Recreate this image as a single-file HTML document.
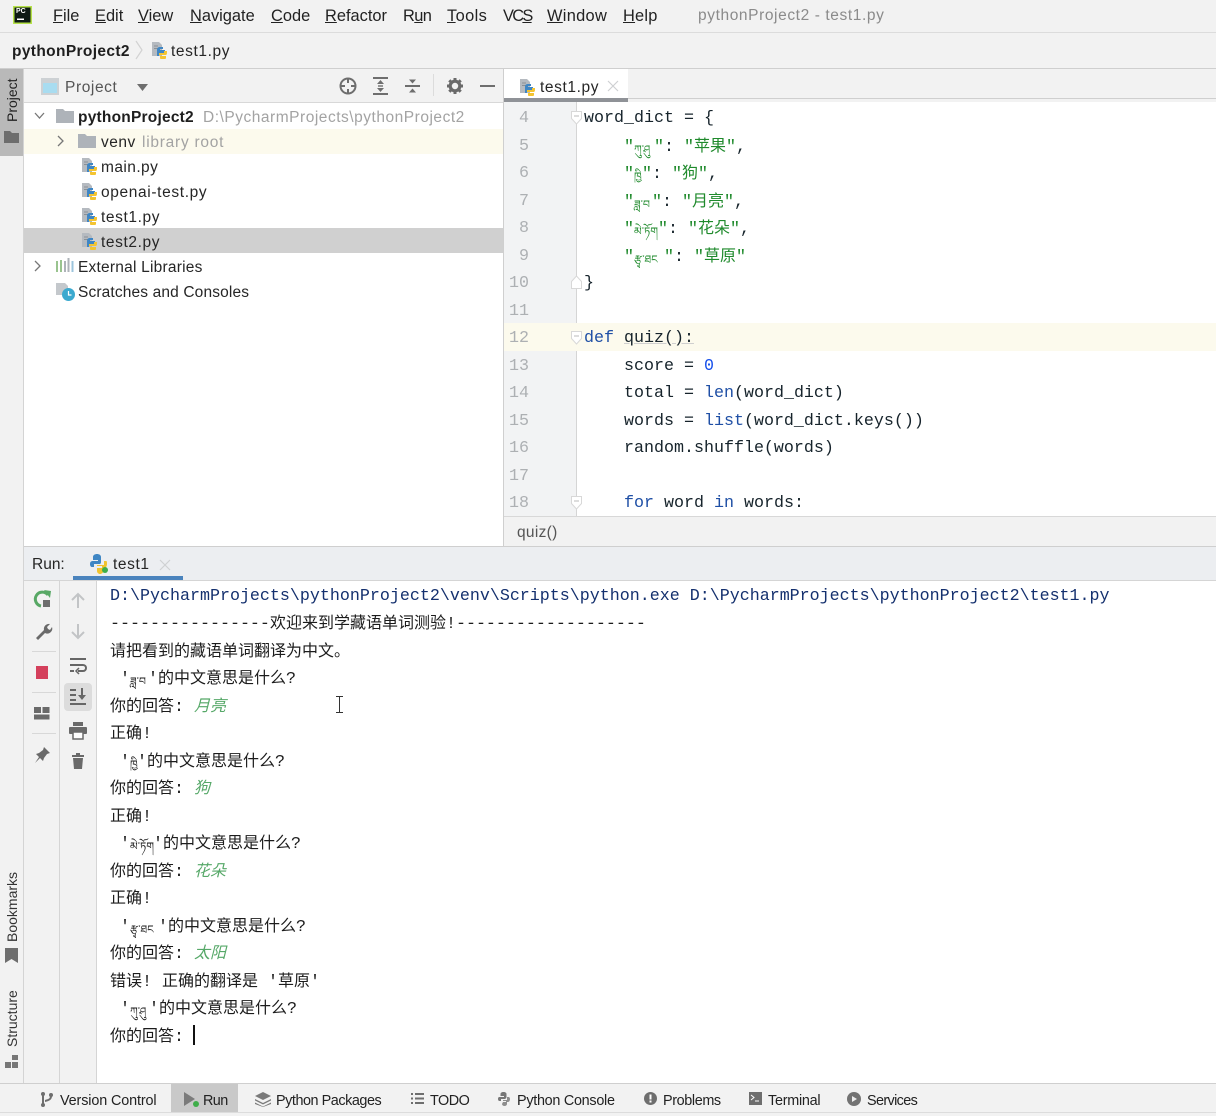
<!DOCTYPE html>
<html lang="zh"><head><meta charset="utf-8"><title>pythonProject2 - test1.py</title>
<style>
html,body{margin:0;padding:0;background:#f2f2f2}
#p{position:relative;width:1216px;height:1116px;overflow:hidden;background:#f2f2f2;font-family:"Liberation Sans","Noto Sans CJK SC",sans-serif;color:#222}
.b{position:absolute}
.t{position:absolute;white-space:pre;line-height:20px;font-size:15.5px;color:#262626}
.m{font-size:16.4px;color:#222;top:6px}
.c{position:absolute;white-space:pre;line-height:24px;font-family:"Liberation Mono","Noto Sans CJK SC",monospace;font-size:16.67px;color:#16232b}
.n{position:absolute;left:504px;width:25px;text-align:right;line-height:24px;font-family:"Liberation Mono",monospace;font-size:16.67px;color:#adb0b3;white-space:pre}
.g{color:#1f8a2c}.k{color:#1f4fa5}.bl{color:#1750eb}.f{color:#0a5a98}
.o{position:absolute;left:110px;white-space:pre;line-height:24px;font-family:"Liberation Mono","Noto Sans CJK SC",monospace;font-size:16.67px;color:#1c1c1c}
.z{font-size:16px}
.o i{color:#56a868;font-style:italic;font-size:16px}
.ti{display:inline-block;font-size:11px;line-height:10px;position:relative;top:2px;font-family:"Noto Sans CJK SC","DejaVu Sans",sans-serif}
svg{position:absolute;overflow:visible}
.s{font-size:14.4px;color:#222;top:1091px}
.v{transform-origin:0 0;transform:rotate(-90deg);font-size:14px;color:#333}
</style></head><body><div id="p">
<svg width="0" height="0" style="position:absolute"><defs>
<symbol id="py" viewBox="0 0 18 18"><path d="M2 1h7l3 3v11H2z" fill="#b5bac0"/><path d="M4 5h4M4 7.500h5" stroke="#8a9096"/><path d="M7 9c0-2 1-3 3-3h3v2h-3v1h5v3H9v3H7z" fill="#3f86c4"/><path d="M9 14h6c2 0 2-1 2-3v-1h-3v2H9z" fill="#f4c430"/><path d="M10 15h6v2c0 1-1 1-2 1h-3c-1 0-1-1-1-1z" fill="#f4c430"/></symbol>
<symbol id="fo" viewBox="0 0 18 16"><path d="M0 1h7l2 2h9v12H0z" fill="#aeb3b9"/></symbol>
</defs></svg>

<!-- top bars -->
<div class="b" style="left:0;top:32px;width:1216px;height:1px;background:#dcdcdc"></div>
<div class="b" style="left:0;top:68px;width:1216px;height:1px;background:#cfcfcf"></div>
<svg style="left:13px;top:6px" width="19" height="18" viewBox="0 0 19 18"><rect width="19" height="18" fill="#b6e24a"/><rect x="1.500" y="1.500" width="16" height="15" fill="#0d1a14"/><rect x="4" y="12.500" width="7" height="1.500" fill="#fff"/></svg>
<div class="b" style="left:16px;top:8px;font-size:7px;line-height:8px;font-weight:bold;color:#fff">PC</div>
<div class="t m" style="left:53px"><u>F</u>ile</div>
<div class="t m" style="left:95px"><u>E</u>dit</div>
<div class="t m" style="left:138px"><u>V</u>iew</div>
<div class="t m" style="left:190px"><u>N</u>avigate</div>
<div class="t m" style="left:271px"><u>C</u>ode</div>
<div class="t m" style="left:325px"><u>R</u>efactor</div>
<div class="t m" style="left:403px;letter-spacing:-.6px">R<u>u</u>n</div>
<div class="t m" style="left:447px;letter-spacing:.4px"><u>T</u>ools</div>
<div class="t m" style="left:503px;letter-spacing:-1.700px">VC<u>S</u></div>
<div class="t m" style="left:547px;letter-spacing:.3px"><u>W</u>indow</div>
<div class="t m" style="left:623px;letter-spacing:.2px"><u>H</u>elp</div>
<div class="t m" style="left:698px;color:#8b8b8b;font-size:15.500px;letter-spacing:.6px">pythonProject2 - test1.py</div>

<div class="t" style="left:12px;top:42px;font-weight:bold;font-size:15.500px;color:#1e1e1e;letter-spacing:.36px">pythonProject2</div>
<svg style="left:135px;top:40px" width="9" height="20"><path d="M1 1l6 9-6 9" fill="none" stroke="#d2d2d2" stroke-width="1.200"/></svg>
<svg style="left:150px;top:41px" width="18" height="18"><use href="#py"/></svg>
<div class="t" style="left:171px;top:42px;letter-spacing:.6px">test1.py</div>

<!-- left stripe -->
<div class="b" style="left:0;top:69px;width:24px;height:87px;background:#b9b9b9"></div>
<div class="b" style="left:23px;top:69px;width:1px;height:1014px;background:#d4d4d4"></div>
<div class="t v" style="left:2px;top:122px;color:#222">Project</div>
<svg style="left:4px;top:130px" width="15" height="13"><path d="M0 1h6l2 2h7v10H0z" fill="#6d6d6d"/></svg>
<div class="t v" style="left:2px;top:942px">Bookmarks</div>
<svg style="left:5px;top:948px" width="13" height="15"><path d="M0 0h13v15l-6.500-4L0 15z" fill="#6e6e6e"/></svg>
<div class="t v" style="left:2px;top:1047px">Structure</div>
<svg style="left:5px;top:1055px" width="14" height="14"><rect x="7" y="0" width="6" height="5" fill="#777"/><rect x="0" y="7" width="6" height="6" fill="#777"/><rect x="7" y="7" width="6" height="6" fill="#777"/></svg>

<!-- project panel -->
<div class="b" style="left:24px;top:102px;width:479px;height:444px;background:#fff"></div>
<div class="b" style="left:24px;top:102px;width:479px;height:1px;background:#d8d8d8"></div>
<svg style="left:41px;top:78px" width="18" height="17"><rect width="18" height="17" fill="#cdd1d4"/><rect x="2" y="5" width="14" height="10" fill="#a8dcf0"/></svg>
<div class="t" style="left:65px;top:78px;color:#555;letter-spacing:.6px">Project</div>
<svg style="left:137px;top:84px" width="11" height="7"><path d="M0 0h11L5.500 7z" fill="#6e6e6e"/></svg>
<svg style="left:339px;top:77px" width="18" height="18" fill="none" stroke="#6e6e6e"><circle cx="9" cy="9" r="7.500" stroke-width="2"/><path d="M9 1v5M9 12v5M1 9h5M12 9h5" stroke-width="2"/></svg>
<svg style="left:373px;top:77px" width="16" height="18" fill="#6e6e6e"><rect width="15" height="2" y="0"/><rect width="15" height="2" y="16"/><path d="M7.500 3l3.500 4H4zM7.500 15l3.500-4H4z"/><rect x="5" y="8.300" width="5" height="1.400"/></svg>
<svg style="left:405px;top:77px" width="16" height="18" fill="#6e6e6e"><rect width="15" height="2" y="8"/><path d="M7.500 6.500l3.500-4H4zM7.500 11.500l3.500 4H4z"/></svg>
<div class="b" style="left:433px;top:74px;width:1px;height:22px;background:#dcdcdc"></div>
<svg style="left:447px;top:78px" width="16" height="16" viewBox="0 0 16 16"><circle cx="8" cy="8" r="4.800" fill="none" stroke="#6a6a6a" stroke-width="3.200"/><path d="M8 0v3M8 13v3M0 8h3M13 8h3M2.300 2.300l2.200 2.200M11.500 11.500l2.200 2.200M2.300 13.700l2.200-2.200M11.500 4.500l2.200-2.200" stroke="#6a6a6a" stroke-width="3"/></svg>
<div class="b" style="left:480px;top:85px;width:15px;height:2px;background:#6e6e6e"></div>

<svg style="left:34px;top:112px" width="11" height="8"><path d="M1 1l4.500 5L10 1" fill="none" stroke="#777" stroke-width="1.300"/></svg>
<svg style="left:56px;top:108px" width="18" height="16"><use href="#fo"/></svg>
<div class="t" style="left:78px;top:108px;font-weight:bold;color:#1e1e1e;letter-spacing:.22px">pythonProject2</div>
<div class="t" style="left:203px;top:108px;color:#a3a3a3;letter-spacing:.52px">D:\PycharmProjects\pythonProject2</div>
<div class="b" style="left:24px;top:129px;width:479px;height:25px;background:#fcfaed"></div>
<svg style="left:57px;top:135px" width="8" height="12"><path d="M1 1l5 5-5 5" fill="none" stroke="#777" stroke-width="1.300"/></svg>
<svg style="left:78px;top:133px" width="18" height="16"><use href="#fo"/></svg>
<div class="t" style="left:101px;top:133px;letter-spacing:.5px">venv</div>
<div class="t" style="left:142px;top:133px;color:#a3a3a3;letter-spacing:.75px">library root</div>
<svg style="left:80px;top:157px" width="18" height="18"><use href="#py"/></svg>
<div class="t" style="left:101px;top:158px;letter-spacing:.43px">main.py</div>
<svg style="left:80px;top:182px" width="18" height="18"><use href="#py"/></svg>
<div class="t" style="left:101px;top:183px;letter-spacing:.64px">openai-test.py</div>
<svg style="left:80px;top:207px" width="18" height="18"><use href="#py"/></svg>
<div class="t" style="left:101px;top:208px;letter-spacing:.6px">test1.py</div>
<div class="b" style="left:24px;top:228px;width:479px;height:25px;background:#d0d0d0"></div>
<svg style="left:80px;top:232px" width="18" height="18"><use href="#py"/></svg>
<div class="t" style="left:101px;top:233px;letter-spacing:.6px">test2.py</div>
<svg style="left:34px;top:260px" width="8" height="12"><path d="M1 1l5 5-5 5" fill="none" stroke="#777" stroke-width="1.300"/></svg>
<svg style="left:56px;top:258px" width="18" height="15"><path d="M1 3v11" stroke="#9ac48f" stroke-width="2"/><path d="M5 2v12" stroke="#9ac48f" stroke-width="2"/><path d="M9 3v11" stroke="#aeb3b9" stroke-width="2"/><path d="M12.500 0v14" stroke="#aeb3b9" stroke-width="2"/><path d="M16.500 3v11" stroke="#9cc4dc" stroke-width="2"/></svg>
<div class="t" style="left:78px;top:258px;letter-spacing:.22px">External Libraries</div>
<svg style="left:56px;top:282px" width="20" height="20"><path d="M0 1h9l3 3v9H0z" fill="#c4c8cc"/><circle cx="12.500" cy="12.500" r="6.500" fill="#3ba9cf"/><path d="M12.500 9v4h3" stroke="#fff" fill="none" stroke-width="1.200"/></svg>
<div class="t" style="left:78px;top:283px;letter-spacing:.14px">Scratches and Consoles</div>

<!-- divider -->
<div class="b" style="left:503px;top:69px;width:1px;height:477px;background:#cfcfcf"></div>

<!-- editor -->
<div class="b" style="left:504px;top:69px;width:124px;height:29px;background:#fff"></div>
<div class="b" style="left:504px;top:98px;width:712px;height:1px;background:#cfcfcf"></div>
<div class="b" style="left:504px;top:98px;width:124px;height:4px;background:#8f9297"></div>
<svg style="left:518px;top:78px" width="18" height="18"><use href="#py"/></svg>
<div class="t" style="left:540px;top:78px;letter-spacing:.6px">test1.py</div>
<svg style="left:608px;top:81px" width="10" height="10"><path d="M0 0l10 10M10 0L0 10" stroke="#cfd1d3" stroke-width="1.200"/></svg>

<div class="b" style="left:504px;top:102px;width:712px;height:415px;background:#fff"></div>
<div class="b" style="left:504px;top:102px;width:72px;height:415px;background:#f2f3f4"></div>
<div class="b" style="left:576px;top:102px;width:1px;height:415px;background:#d5d5d5"></div>
<div class="b" style="left:504px;top:323px;width:712px;height:28px;background:#fcfaed"></div>

<div class="n" style="top:107px">4</div>
<div class="n" style="top:135px">5</div>
<div class="n" style="top:162px">6</div>
<div class="n" style="top:190px">7</div>
<div class="n" style="top:217px">8</div>
<div class="n" style="top:245px">9</div>
<div class="n" style="top:272px">10</div>
<div class="n" style="top:300px">11</div>
<div class="n" style="top:327px">12</div>
<div class="n" style="top:355px">13</div>
<div class="n" style="top:382px">14</div>
<div class="n" style="top:410px">15</div>
<div class="n" style="top:437px">16</div>
<div class="n" style="top:465px">17</div>
<div class="n" style="top:492px">18</div>

<svg style="left:571px;top:111px" width="11" height="14"><path d="M.5.500h10v7l-5 5.500-5-5.500z" fill="#fff" stroke="#d8d8d8"/><path d="M3 5h5" stroke="#bbb"/></svg>
<svg style="left:571px;top:275px" width="11" height="14"><path d="M.5 13.500h10v-7l-5-5.500-5 5.500z" fill="#fff" stroke="#d8d8d8"/></svg>
<svg style="left:571px;top:331px" width="11" height="14"><path d="M.5.500h10v7l-5 5.500-5-5.500z" fill="#fff" stroke="#d8d8d8"/><path d="M3 5h5" stroke="#bbb"/></svg>
<svg style="left:571px;top:496px" width="11" height="14"><path d="M.5.500h10v7l-5 5.500-5-5.500z" fill="#fff" stroke="#d8d8d8"/><path d="M3 5h5" stroke="#bbb"/></svg>

<div class="c" style="left:584px;top:107px">word_dict = {</div>
<div class="c g" style="left:624px;top:135px">"<span class="ti" style="width:20px">ཀུ་ཤུ</span>"<span style="color:#16232b">: </span>"<span class="z">苹果</span>"<span style="color:#16232b">,</span></div>
<div class="c g" style="left:624px;top:162px">"<span class="ti" style="width:8px">ཁྱི</span>"<span style="color:#16232b">: </span>"<span class="z">狗</span>"<span style="color:#16232b">,</span></div>
<div class="c g" style="left:624px;top:190px">"<span class="ti" style="width:18px">ཟླ་བ</span>"<span style="color:#16232b">: </span>"<span class="z">月亮</span>"<span style="color:#16232b">,</span></div>
<div class="c g" style="left:624px;top:217px">"<span class="ti" style="width:24px">མེ་ཏོག</span>"<span style="color:#16232b">: </span>"<span class="z">花朵</span>"<span style="color:#16232b">,</span></div>
<div class="c g" style="left:624px;top:245px">"<span class="ti" style="width:30px">རྩྭ་ཐང</span>"<span style="color:#16232b">: </span>"<span class="z">草原</span>"</div>
<div class="c" style="left:584px;top:272px">}</div>
<div class="c" style="left:584px;top:327px"><span class="k">def</span> <span style="text-decoration:underline;text-decoration-color:#cfcfcf">quiz():</span></div>
<div class="c" style="left:624px;top:355px">score = <span class="bl">0</span></div>
<div class="c" style="left:624px;top:382px">total = <span class="k">len</span>(word_dict)</div>
<div class="c" style="left:624px;top:410px">words = <span class="k">list</span>(word_dict.keys())</div>
<div class="c" style="left:624px;top:437px">random.shuffle(words)</div>
<div class="c" style="left:624px;top:492px"><span class="k">for</span> word <span class="k">in</span> words:</div>

<div class="b" style="left:504px;top:516px;width:712px;height:1px;background:#d8d8d8"></div>
<div class="t" style="left:517px;top:523px;color:#555;letter-spacing:.3px">quiz()</div>
<div class="b" style="left:24px;top:546px;width:1192px;height:1px;background:#cfcfcf"></div>

<!-- run panel -->
<div class="b" style="left:24px;top:547px;width:1192px;height:33px;background:#eceef1"></div>
<div class="t" style="left:32px;top:555px">Run:</div>
<svg style="left:89px;top:554px" width="20" height="20" viewBox="0 0 20 20"><path d="M1 10c0-2 1-3 3-3h5V6H4V3c0-2 2-3 4-3s4 1 4 3v5c0 2-1 2-2 2H5v3H3c-1 0-2-1-2-3z" fill="#3f86c4"/><path d="M8 14h5v-2H8v-1h7v-4h2c1 0 1 1 1 3s-1 4-3 4h-1v4c0 1-2 2-3 2s-3-1-3-3z" fill="#f0c32e"/><circle cx="16" cy="16" r="3" fill="#3fae4a"/></svg>
<div class="t" style="left:113px;top:555px;letter-spacing:.6px">test1</div>
<svg style="left:160px;top:560px" width="10" height="10"><path d="M0 0l10 10M10 0L0 10" stroke="#cfd1d3" stroke-width="1.200"/></svg>
<div class="b" style="left:73px;top:576px;width:110px;height:4px;background:#4a83bd"></div>
<div class="b" style="left:24px;top:580px;width:1192px;height:1px;background:#d5d5d5"></div>

<div class="b" style="left:59px;top:581px;width:1px;height:502px;background:#d5d5d5"></div>
<div class="b" style="left:96px;top:581px;width:1px;height:502px;background:#d5d5d5"></div>
<div class="b" style="left:97px;top:581px;width:1119px;height:502px;background:#fff"></div>

<!-- run toolbar col 1 -->
<svg style="left:33px;top:589px" width="19" height="20" fill="none"><path d="M15 6A7 7 0 1 0 8 17" stroke="#58a865" stroke-width="3"/><path d="M11 1l7 1-1 7z" fill="#58a865"/><rect x="10" y="11" width="7" height="7" fill="#6e6e6e"/></svg>
<svg style="left:34px;top:622px" width="18" height="18"><path d="M2 16l8-8a5 5 0 0 1 6-6l-3 3 1 2 2 1 2-3a5 5 0 0 1-7 6l-7 7z" fill="#6a6a6a"/></svg>
<div class="b" style="left:32px;top:651px;width:24px;height:1px;background:#d8d8d8"></div>
<div class="b" style="left:36px;top:666px;width:12px;height:13px;background:#d4405c"></div>
<div class="b" style="left:32px;top:692px;width:24px;height:1px;background:#d8d8d8"></div>
<svg style="left:34px;top:707px" width="16" height="13" fill="#6a6a6a"><rect width="7" height="6"/><rect x="8.500" width="7" height="6"/><rect y="7.500" width="15.500" height="5"/></svg>
<div class="b" style="left:32px;top:733px;width:24px;height:1px;background:#d8d8d8"></div>
<svg style="left:33px;top:747px" width="18" height="18"><path d="M11 0l6 6-3 1-3 4-1 3-3-3-5 5 4-6-3-3 3-1 4-3z" fill="#6a6a6a"/></svg>

<!-- run toolbar col 2 -->
<div class="b" style="left:64px;top:683px;width:28px;height:28px;background:#dcdcdc;border-radius:4px"></div>
<svg style="left:71px;top:592px" width="14" height="16" fill="none" stroke="#c2c4c6" stroke-width="2"><path d="M7 16V2M1 8l6-6 6 6"/></svg>
<svg style="left:71px;top:624px" width="14" height="16" fill="none" stroke="#c2c4c6" stroke-width="2"><path d="M7 0v14M1 8l6 6 6-6"/></svg>
<svg style="left:70px;top:658px" width="17" height="16" fill="none" stroke="#666" stroke-width="2"><path d="M0 1h16M0 7h13c4 0 4 6 0 6H8M0 13h4"/><path d="M9 10l-3 3 3 3" stroke-width="1.500"/></svg>
<svg style="left:70px;top:688px" width="17" height="17" fill="#666"><rect y="1" width="6" height="2"/><rect y="6" width="6" height="2"/><rect y="15" width="16" height="2"/><rect y="11" width="6" height="2"/><path d="M11 0h2v7h3l-4 5-4-5h3z"/></svg>
<svg style="left:69px;top:722px" width="18" height="17" fill="#6a6a6a"><rect x="4" width="10" height="4"/><rect y="5" width="18" height="7" rx="1"/><rect x="4" y="10" width="10" height="7" fill="#fff" stroke="#6a6a6a" stroke-width="1.500"/></svg>
<svg style="left:72px;top:753px" width="12" height="16" fill="#6a6a6a"><rect x="0" y="2" width="12" height="2"/><rect x="4" y="0" width="4" height="2"/><path d="M1 5h10l-1 11H2z"/></svg>

<!-- console -->
<div class="o" style="top:585px;color:#14306e">D:\PycharmProjects\pythonProject2\venv\Scripts\python.exe D:\PycharmProjects\pythonProject2\test1.py</div>
<div class="o" style="top:612px">----------------<span class="z">欢迎来到学藏语单词测验</span>!-------------------</div>
<div class="o" style="top:640px"><span class="z">请把看到的藏语单词翻译为中文。</span></div>
<div class="o" style="top:667px"> '<span class="ti" style="width:18px">ཟླ་བ</span>'<span class="z">的中文意思是什么</span>?</div>
<div class="o" style="top:695px"><span class="z">你的回答</span>: <i>月亮</i></div>
<div class="o" style="top:722px"><span class="z">正确</span>!</div>
<div class="o" style="top:750px"> '<span class="ti" style="width:7px">ཁྱི</span>'<span class="z">的中文意思是什么</span>?</div>
<div class="o" style="top:777px"><span class="z">你的回答</span>: <i>狗</i></div>
<div class="o" style="top:805px"><span class="z">正确</span>!</div>
<div class="o" style="top:832px"> '<span class="ti" style="width:23px">མེ་ཏོག</span>'<span class="z">的中文意思是什么</span>?</div>
<div class="o" style="top:860px"><span class="z">你的回答</span>: <i>花朵</i></div>
<div class="o" style="top:887px"><span class="z">正确</span>!</div>
<div class="o" style="top:915px"> '<span class="ti" style="width:28px">རྩྭ་ཐང</span>'<span class="z">的中文意思是什么</span>?</div>
<div class="o" style="top:942px"><span class="z">你的回答</span>: <i>太阳</i></div>
<div class="o" style="top:970px"><span class="z">错误</span>! <span class="z">正确的翻译是</span> '<span class="z">草原</span>'</div>
<div class="o" style="top:997px"> '<span class="ti" style="width:19px">ཀུ་ཤུ</span>'<span class="z">的中文意思是什么</span>?</div>
<div class="o" style="top:1025px"><span class="z">你的回答</span>:</div>
<div class="b" style="left:193px;top:1025px;width:2px;height:20px;background:#111"></div>
<svg style="left:336px;top:696px" width="7" height="17" fill="none" stroke="#333"><path d="M0 .5h7M0 16.500h7M3.500 .5v16"/></svg>

<!-- status bar -->
<div class="b" style="left:0;top:1083px;width:1216px;height:1px;background:#cfcfcf"></div>
<div class="b" style="left:0;top:1112px;width:1216px;height:1px;background:#dcdcdc"></div>
<div class="b" style="left:171px;top:1084px;width:67px;height:28px;background:#c9c9c9"></div>
<svg style="left:41px;top:1092px" width="12" height="15" fill="#6e6e6e"><circle cx="2" cy="2" r="2"/><circle cx="2" cy="13" r="2"/><circle cx="10" cy="3" r="2"/><path d="M1 3h2v9H1zM9 4h2c0 4-3 5-7 6V8c3-1 5-1 5-4z"/></svg>
<div class="t s" style="left:60px;letter-spacing:-.13px">Version Control</div>
<svg style="left:184px;top:1092px" width="17" height="16"><path d="M0 0l11 7-11 7z" fill="#7b7b7b"/><circle cx="12" cy="12" r="3" fill="#3fae4a"/></svg>
<div class="t s" style="left:203px;letter-spacing:-.6px">Run</div>
<svg style="left:255px;top:1092px" width="16" height="15" fill="#7a7a7a"><path d="M8 0l8 4-8 4-8-4z"/><path d="M0 7l8 4 8-4v1.500l-8 4-8-4z"/><path d="M0 10.500l8 4 8-4V12l-8 3-8-3z"/></svg>
<div class="t s" style="left:276px;letter-spacing:-.45px">Python Packages</div>
<svg style="left:411px;top:1093px" width="13" height="11" fill="#6e6e6e"><path d="M0 0h2v2H0zM4 0h9v2H4zM0 4.500h2v2H0zM4 4.500h9v2H4zM0 9h2v2H0zM4 9h9v2H4z"/></svg>
<div class="t s" style="left:430px;letter-spacing:-.5px">TODO</div>
<svg style="left:497px;top:1092px" width="14" height="14"><path d="M1 7c0-2 1-2 2-2h4V4H3.500V2c0-1 1-2 3-2s3 1 3 2v3c0 1-1 2-2 2H4v2H2.500C1.500 9 1 8 1 7z" fill="#777"/><path d="M6 10h3V9H6V8h4V5h1.500c1 0 1.500 1 1.500 2s-.5 3-2 3H10v2c0 1-1 2-2.500 2S5 13 5 12z" fill="#8d8d8d"/></svg>
<div class="t s" style="left:517px;letter-spacing:-.28px">Python Console</div>
<svg style="left:644px;top:1092px" width="13" height="13"><circle cx="6.500" cy="6.500" r="6.500" fill="#6e6e6e"/><rect x="5.500" y="2.500" width="2" height="5" fill="#fff"/><rect x="5.500" y="8.500" width="2" height="2" fill="#fff"/></svg>
<div class="t s" style="left:663px;letter-spacing:-.38px">Problems</div>
<svg style="left:749px;top:1092px" width="13" height="13"><rect width="13" height="13" fill="#6e6e6e"/><path d="M2 3l3 2.500L2 8" stroke="#fff" fill="none"/><path d="M6 9h4" stroke="#fff"/></svg>
<div class="t s" style="left:768px;letter-spacing:-.25px">Terminal</div>
<svg style="left:847px;top:1092px" width="14" height="14"><circle cx="7" cy="7" r="7" fill="#737373"/><path d="M5 4l5 3-5 3z" fill="#eee"/></svg>
<div class="t s" style="left:867px;letter-spacing:-.62px">Services</div>
</div></body></html>
